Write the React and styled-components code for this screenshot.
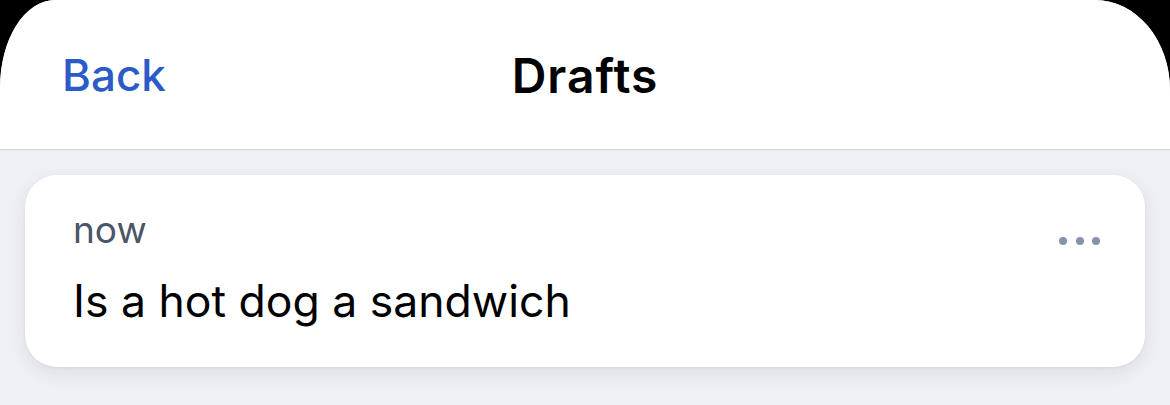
import styled, { createGlobalStyle } from "styled-components";

const GlobalStyle = createGlobalStyle`
  html, body {
    margin: 0;
    padding: 0;
    background: #000;
  }
  body {
    font-family: Inter, "Noto Sans", sans-serif;
    -webkit-font-smoothing: antialiased;
  }
`;

const Sheet = styled.div`
  width: 1170px;
  height: 405px;
  background: #eef0f5;
  border-radius: 55px 75px 0 0 / 88px 90px 0 0;
  overflow: hidden;
  display: flex;
  flex-direction: column;
`;

const Header = styled.header`
  height: 150px;
  flex: none;
  background: #fff;
  border-bottom: 1px solid #cfd4de;
  display: grid;
  grid-template-columns: 1fr auto 1fr;
  align-items: center;
  padding: 0 62px;
  box-sizing: border-box;
`;

const BackButton = styled.button`
  justify-self: start;
  border: 0;
  background: none;
  padding: 0;
  margin-top: 0;
  font-family: inherit;
  font-size: 44px;
  font-weight: 500;
  color: #2a5bc7;
  cursor: pointer;
`;

const Title = styled.h1`
  margin: 0;
  margin-top: 2px;
  font-size: 48px;
  font-weight: 600;
  letter-spacing: 1px;
  color: #000;
`;

const Content = styled.main`
  padding: 25px;
`;

const Card = styled.article`
  background: #fff;
  border-radius: 32px;
  height: 192px;
  box-sizing: border-box;
  padding: 36px 45px 0 48px;
  box-shadow: 0 6px 18px rgba(30, 40, 70, 0.09), 0 1px 3px rgba(30, 40, 70, 0.05);
  display: flex;
  flex-direction: column;
`;

const CardTop = styled.div`
  display: flex;
  justify-content: space-between;
  align-items: center;
`;

const Time = styled.span`
  font-size: 37px;
  color: #4a5568;
  line-height: 1;
`;

const Dots = styled.span`
  display: flex;
  gap: 8.5px;
  margin-top: 22px;
  span {
    width: 8px;
    height: 8px;
    border-radius: 50%;
    background: #8793ab;
  }
`;

const Body = styled.p`
  margin: 31px 0 0;
  font-size: 44.5px;
  color: #000;
  line-height: 1;
`;

export default function App() {
  return (
    <>
      <GlobalStyle />
      <Sheet>
        <Header>
          <BackButton>Back</BackButton>
          <Title>Drafts</Title>
          <span />
        </Header>
        <Content>
          <Card>
            <CardTop>
              <Time>now</Time>
              <Dots>
                <span />
                <span />
                <span />
              </Dots>
            </CardTop>
            <Body>Is a hot dog a sandwich</Body>
          </Card>
        </Content>
      </Sheet>
    </>
  );
}
